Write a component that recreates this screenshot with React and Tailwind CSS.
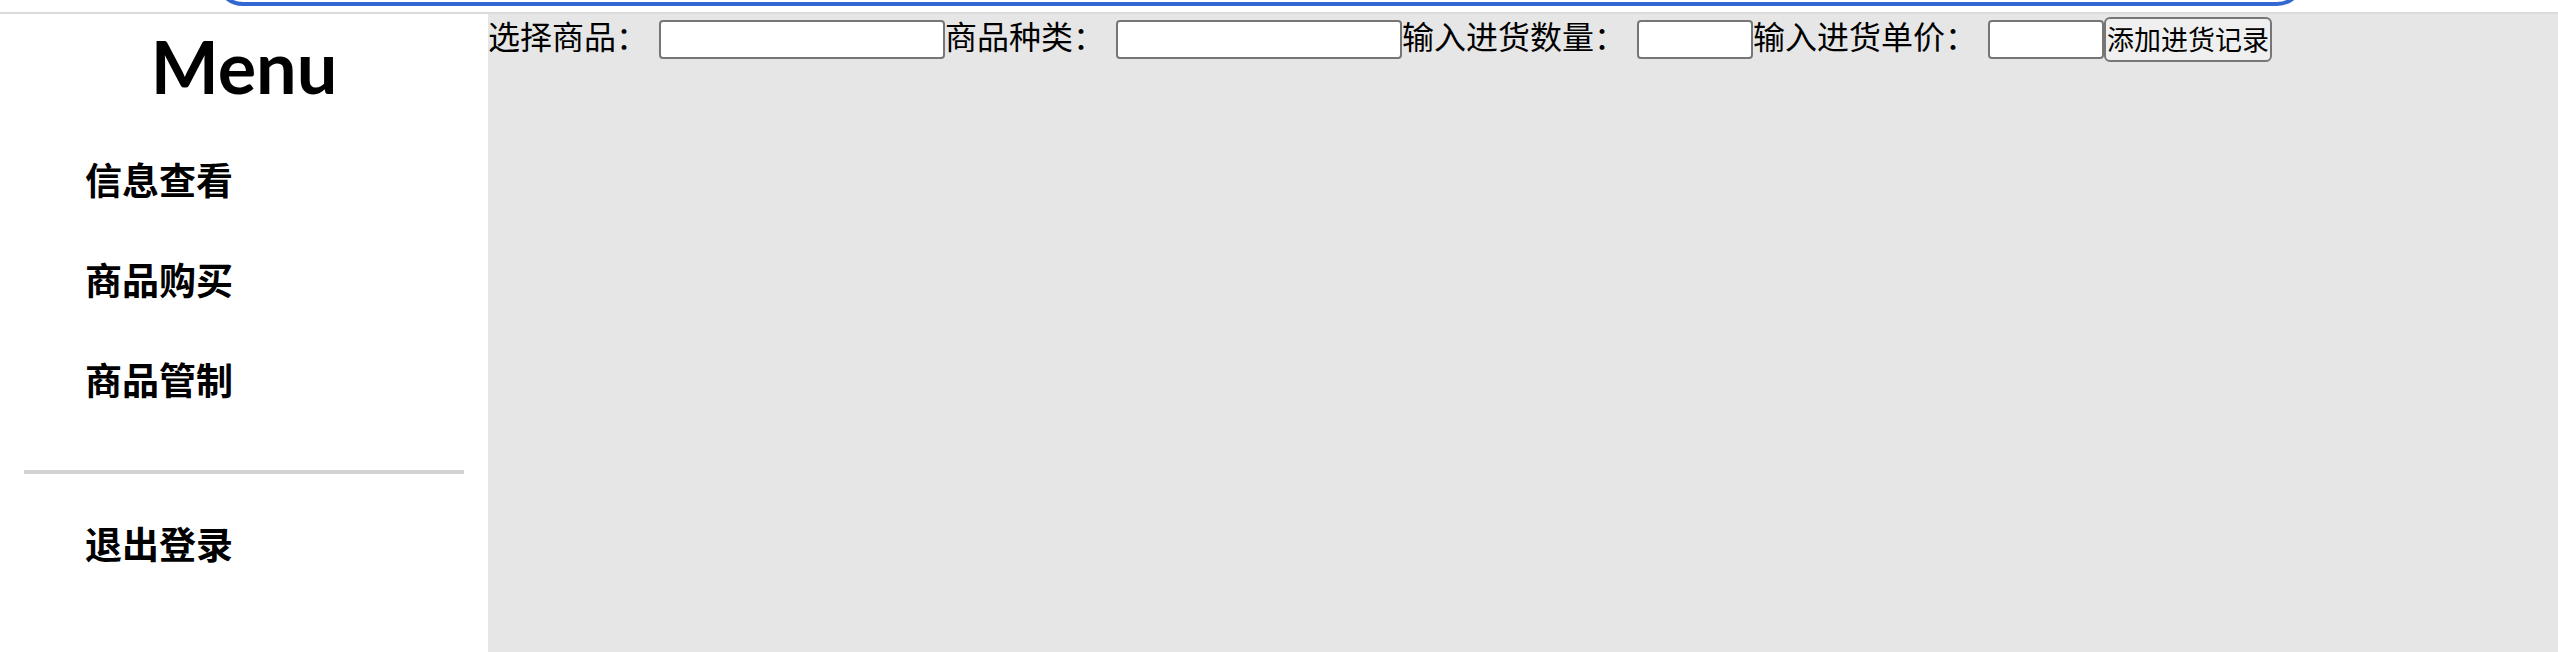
import React from "react";

const menuItems = ["信息查看", "商品购买", "商品管制"];

const fields = [
  { id: "goods", label: "选择商品：", width: "w-[286px]" },
  { id: "category", label: "商品种类：", width: "w-[286px]" },
  { id: "quantity", label: "输入进货数量：", width: "w-[116px]" },
  { id: "price", label: "输入进货单价：", width: "w-[116px]" },
];

function TopBar() {
  return (
    <header className="flex h-[14px] shrink-0 items-end overflow-hidden border-b-2 border-[#dadada] bg-white pr-[253px] pb-[6px] pl-[215px]">
      <div className="h-14 flex-1 shrink-0 rounded-full border-4 border-[#3367d1]" />
    </header>
  );
}

function MenuLink({ children }) {
  return (
    <a href="#" className="flex h-[100px] items-center pl-[61px] text-[37px] font-bold">
      {children}
    </a>
  );
}

function Sidebar() {
  return (
    <aside className="w-[488px] shrink-0 bg-white px-6 pt-2">
      <h1 className="pb-5 text-center font-['Trebuchet_MS','Lato',sans-serif] text-[72px] leading-[88px] font-bold">
        Menu
      </h1>
      <nav>
        {menuItems.map((item) => (
          <MenuLink key={item}>{item}</MenuLink>
        ))}
        <hr className="mt-10 mb-5 border-t-4 border-[#d3d3d3]" />
        <MenuLink>退出登录</MenuLink>
      </nav>
    </aside>
  );
}

function RestockForm() {
  return (
    <form className="flex flex-wrap items-center" onSubmit={(e) => e.preventDefault()}>
      {fields.map((field) => (
        <div key={field.id} className="flex items-center">
          <label htmlFor={field.id} className="pr-[11px] pb-2 text-[32px] leading-[42px]">
            {field.label}
          </label>
          <input
            id={field.id}
            type="text"
            className={`h-[39px] rounded border-2 border-[#767676] bg-white px-1 text-[26px] ${field.width}`}
          />
        </div>
      ))}
      <button
        type="submit"
        className="h-[45px] rounded-md border-2 border-[#767676] bg-[#efefef] px-px text-[27px] leading-10"
      >
        添加进货记录
      </button>
    </form>
  );
}

export default function App() {
  return (
    <div
      lang="zh-CN"
      className="flex min-h-screen flex-col font-['Noto_Sans_CJK_SC',sans-serif] text-black"
    >
      <TopBar />
      <div className="flex flex-1">
        <Sidebar />
        <main className="min-w-0 flex-1 bg-[#e6e6e6]">
          <RestockForm />
        </main>
      </div>
    </div>
  );
}
